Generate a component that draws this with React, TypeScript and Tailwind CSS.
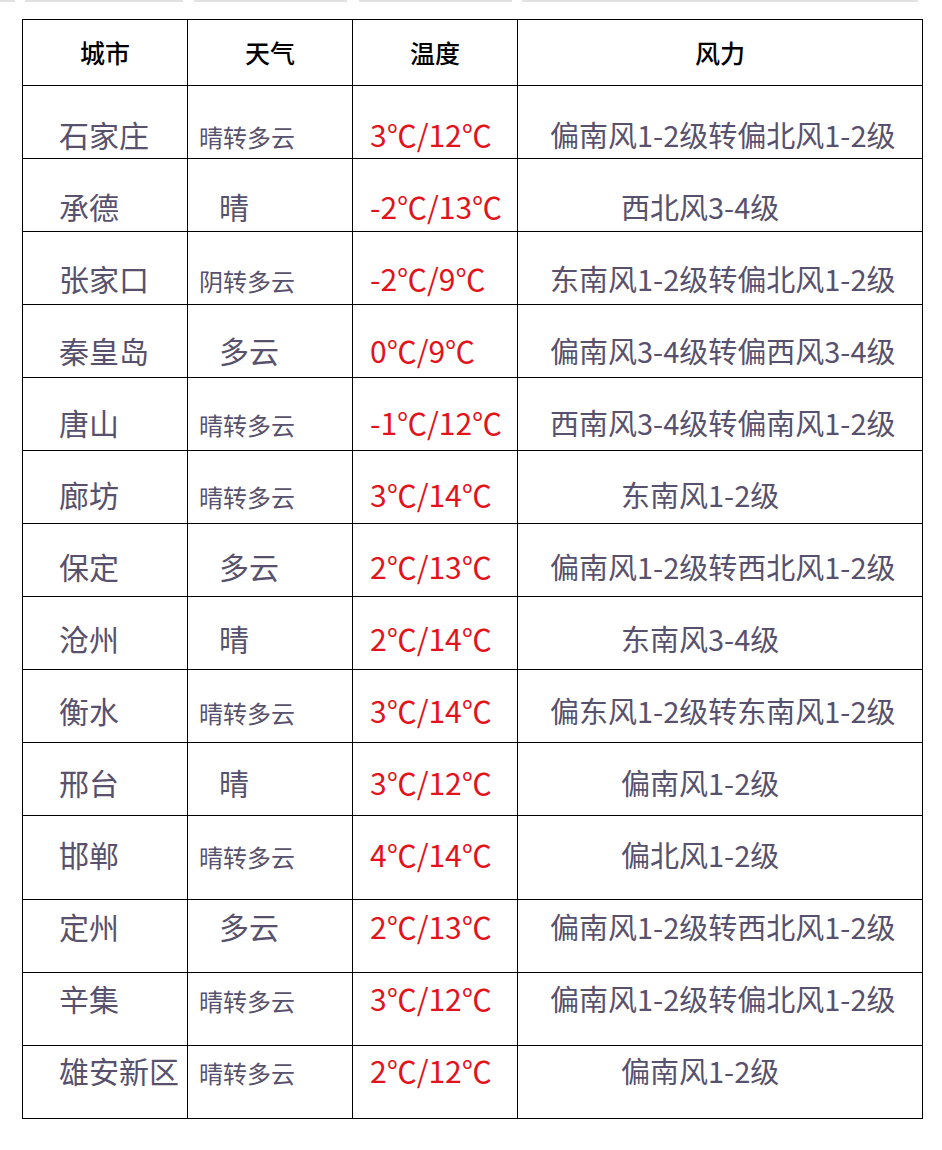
import React from 'react'

type Row = {
  city: string
  weather: string
  small: boolean
  temp: string
  wind: string
  long: boolean
  rowClass: string
  padClass: string
}

const rows: Row[] = [
  { city: '石家庄', weather: '晴转多云', small: true, temp: '3℃/12℃', wind: '偏南风1-2级转偏北风1-2级', long: true, rowClass: 'h-[73px]', padClass: 'pt-[33px]' },
  { city: '承德', weather: '晴', small: false, temp: '-2℃/13℃', wind: '西北风3-4级', long: false, rowClass: 'h-[73px]', padClass: 'pt-[32px]' },
  { city: '张家口', weather: '阴转多云', small: true, temp: '-2℃/9℃', wind: '东南风1-2级转偏北风1-2级', long: true, rowClass: 'h-[73px]', padClass: 'pt-[31px]' },
  { city: '秦皇岛', weather: '多云', small: false, temp: '0℃/9℃', wind: '偏南风3-4级转偏西风3-4级', long: true, rowClass: 'h-[73px]', padClass: 'pt-[30px]' },
  { city: '唐山', weather: '晴转多云', small: true, temp: '-1℃/12℃', wind: '西南风3-4级转偏南风1-2级', long: true, rowClass: 'h-[73px]', padClass: 'pt-[29px]' },
  { city: '廊坊', weather: '晴转多云', small: true, temp: '3℃/14℃', wind: '东南风1-2级', long: false, rowClass: 'h-[73px]', padClass: 'pt-[28px]' },
  { city: '保定', weather: '多云', small: false, temp: '2℃/13℃', wind: '偏南风1-2级转西北风1-2级', long: true, rowClass: 'h-[73px]', padClass: 'pt-[27px]' },
  { city: '沧州', weather: '晴', small: false, temp: '2℃/14℃', wind: '东南风3-4级', long: false, rowClass: 'h-[73px]', padClass: 'pt-[26px]' },
  { city: '衡水', weather: '晴转多云', small: true, temp: '3℃/14℃', wind: '偏东风1-2级转东南风1-2级', long: true, rowClass: 'h-[73px]', padClass: 'pt-[25px]' },
  { city: '邢台', weather: '晴', small: false, temp: '3℃/12℃', wind: '偏南风1-2级', long: false, rowClass: 'h-[73px]', padClass: 'pt-[24px]' },
  { city: '邯郸', weather: '晴转多云', small: true, temp: '4℃/14℃', wind: '偏北风1-2级', long: false, rowClass: 'h-[84px]', padClass: 'pt-[23px]' },
  { city: '定州', weather: '多云', small: false, temp: '2℃/13℃', wind: '偏南风1-2级转西北风1-2级', long: true, rowClass: 'h-[73px]', padClass: 'pt-[11px]' },
  { city: '辛集', weather: '晴转多云', small: true, temp: '3℃/12℃', wind: '偏南风1-2级转偏北风1-2级', long: true, rowClass: 'h-[73px]', padClass: 'pt-[10px]' },
  { city: '雄安新区', weather: '晴转多云', small: true, temp: '2℃/12℃', wind: '偏南风1-2级', long: false, rowClass: 'h-[73px]', padClass: 'pt-[9px]' },
]

const headers = ['城市', '天气', '温度', '风力']

export default function App() {
  return (
    <div className="min-h-[1150px] bg-white font-['Noto_Sans_CJK_SC','Noto_Sans',sans-serif]">
      {/* faint tab strip from the page above */}
      <div className="flex h-[3px] items-start">
        <div className="h-[2px] w-[15px] bg-[#e2e2e2]" />
        <div className="ml-[10px] h-[2px] w-[158px] bg-[#e2e2e2]" />
        <div className="ml-[11px] h-[2px] w-[153px] bg-[#e2e2e2]" />
        <div className="ml-[12px] h-[2px] w-[153px] bg-[#e2e2e2]" />
        <div className="ml-[10px] h-[2px] w-[396px] bg-[#e2e2e2]" />
      </div>

      <div className="ml-[22px] mt-[16px] w-[901px] border border-black">
        <div className="flex h-[65px]">
          {headers.map((h, i) => (
            <div
              key={h}
              className={`flex items-center justify-center text-[25px] font-medium text-black ${
                i < 3 ? 'w-[165px] border-r border-black' : 'flex-1'
              }`}
            >
              {h}
            </div>
          ))}
        </div>

        {rows.map((r) => (
          <div key={r.city} className={`flex border-t border-black ${r.rowClass}`}>
            <div className={`w-[165px] border-r border-black pl-[36px] text-[30px] leading-[30px] text-[#57516d] ${r.padClass}`}>
              {r.city}
            </div>
            <div
              className={`w-[165px] border-r border-black text-[30px] leading-[30px] text-[#57516d] ${r.padClass} ${
                r.small ? 'pl-[11px]' : 'pl-[31px]'
              }`}
            >
              {r.small ? <span className="text-[24px]">{r.weather}</span> : r.weather}
            </div>
            <div className={`w-[165px] border-r border-black pl-[17px] text-[30px] leading-[30px] text-[#e2131b] ${r.padClass}`}>
              {r.temp}
            </div>
            <div
              className={`flex-1 whitespace-nowrap text-[30px] leading-[30px] text-[#57516d] ${r.padClass} ${
                r.long ? 'pl-[32px]' : 'pl-[103px]'
              }`}
            >
              <span className="text-[29px]">{r.wind}</span>
            </div>
          </div>
        ))}
      </div>
    </div>
  )
}
